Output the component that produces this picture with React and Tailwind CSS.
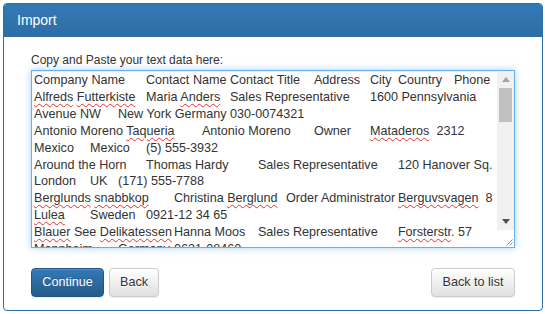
import React from "react";

const misspelled = new Set([
  "Alfreds",
  "Futterkiste",
  "Anders",
  "Taqueria",
  "Mataderos",
  "Berglunds",
  "snabbkop",
  "Berglund",
  "Berguvsvagen",
  "Lulea",
  "Blauer",
  "Delikatessen",
  "Forsterstr",
  "Mannheim",
]);

const rows = [
  "Company Name\tContact Name Contact Title\tAddress\tCity\tCountry\tPhone",
  "Alfreds Futterkiste\tMaria Anders\tSales Representative\t1600 Pennsylvania",
  "Avenue NW\tNew York Germany 030-0074321",
  "Antonio Moreno Taqueria\tAntonio Moreno\tOwner\tMataderos  2312",
  "Mexico\tMexico\t(5) 555-3932",
  "Around the Horn\tThomas Hardy\tSales Representative\t120 Hanover Sq.",
  "London\tUK\t(171) 555-7788",
  "Berglunds snabbkop\tChristina Berglund\tOrder Administrator\tBerguvsvagen  8",
  "Lulea\tSweden\t0921-12 34 65",
  "Blauer See Delikatessen\tHanna Moos\tSales Representative\tForsterstr. 57",
  "Mannheim\tGermany\t0621-08460",
];

// wrap the words a spell checker would flag
const renderRow = (row) =>
  row.split(/(\s+|\.)/).map((tok, i) =>
    misspelled.has(tok) ? (
      <span
        key={i}
        className="underline decoration-wavy decoration-[#e63030] decoration-[0.5px] underline-offset-[2px]"
      >
        {tok}
      </span>
    ) : (
      <React.Fragment key={i}>{tok}</React.Fragment>
    )
  );

const Scrollbar = () => (
  <div className="flex w-[17px] shrink-0 flex-col">
    <div className="flex h-[17px] items-center justify-center bg-[#f1f1f1]">
      <svg width="8" height="5" viewBox="0 0 8 5">
        <path d="M0 5 L4 0 L8 5 Z" fill="#a3a3a3" />
      </svg>
    </div>
    <div className="flex flex-1 flex-col bg-[#f1f1f1]">
      <div className="mx-[2px] h-[34px] bg-[#c1c1c1]" />
    </div>
    <div className="flex h-[17px] items-center justify-center bg-[#f1f1f1]">
      <svg width="8" height="5" viewBox="0 0 8 5">
        <path d="M0 0 L8 0 L4 5 Z" fill="#505050" />
      </svg>
    </div>
    <div className="h-[17px] bg-white">
      <svg width="17" height="17" viewBox="0 0 17 17">
        <path d="M15.5 9.5 L9.5 15.5 M15.5 12.5 L12.5 15.5" stroke="#8a8a8a" strokeWidth="1" />
      </svg>
    </div>
  </div>
);

const App = () => {
  return (
    <div className="h-[314px] w-[545px] bg-white pl-[3px] pt-[3px] font-['Liberation_Sans',Arial,sans-serif] text-[#333]">
      <div className="w-[540px] overflow-hidden rounded-[4px] border border-[#2e6da4] bg-white">
        {/* Heading */}
        <div className="flex h-[33px] items-center bg-gradient-to-b from-[#337ab7] to-[#2e6da4] px-[13px] text-[14px] text-white">
          Import
        </div>

        {/* Body */}
        <div className="px-[27px] pb-[13px] pt-[15px]">
          <div className="h-[17px] text-[12px] leading-[17px]">
            Copy and Paste your text data here:
          </div>
          <div className="mt-[1px] flex h-[178px] border border-[#66afe9] bg-white shadow-[inset_0_1px_1px_rgba(0,0,0,0.075),0_0_7px_rgba(102,175,233,0.6)]">
            <div className="flex-1 overflow-hidden whitespace-pre pl-[2px] pt-[1px] text-[12.6px] leading-[16.9px] text-[#333] [tab-size:8]">
              {rows.map((row, i) => (
                <div key={i}>{renderRow(row)}</div>
              ))}
            </div>
            <Scrollbar />
          </div>

          <div className="mt-[20px] flex items-center justify-between">
            <div className="flex gap-[5px]">
              <button className="h-[29px] w-[73px] rounded-[4px] border border-[#245580] bg-gradient-to-b from-[#337ab7] to-[#265a88] text-[12.6px] text-white shadow-[inset_0_1px_0_rgba(255,255,255,0.15),0_1px_1px_rgba(0,0,0,0.075)] [text-shadow:0_-1px_0_rgba(0,0,0,0.2)]">
                Continue
              </button>
              <button className="h-[29px] w-[50px] rounded-[4px] border border-[#ccc] bg-gradient-to-b from-white to-[#e0e0e0] text-[12.6px] text-[#333] shadow-[inset_0_1px_0_rgba(255,255,255,0.15),0_1px_1px_rgba(0,0,0,0.075)] [text-shadow:0_1px_0_#fff]">
                Back
              </button>
            </div>
            <button className="h-[29px] w-[84px] rounded-[4px] border border-[#ccc] bg-gradient-to-b from-white to-[#e0e0e0] text-[12.6px] text-[#333] shadow-[inset_0_1px_0_rgba(255,255,255,0.15),0_1px_1px_rgba(0,0,0,0.075)] [text-shadow:0_1px_0_#fff]">
              Back to list
            </button>
          </div>
        </div>
      </div>
    </div>
  );
};

export default App;
